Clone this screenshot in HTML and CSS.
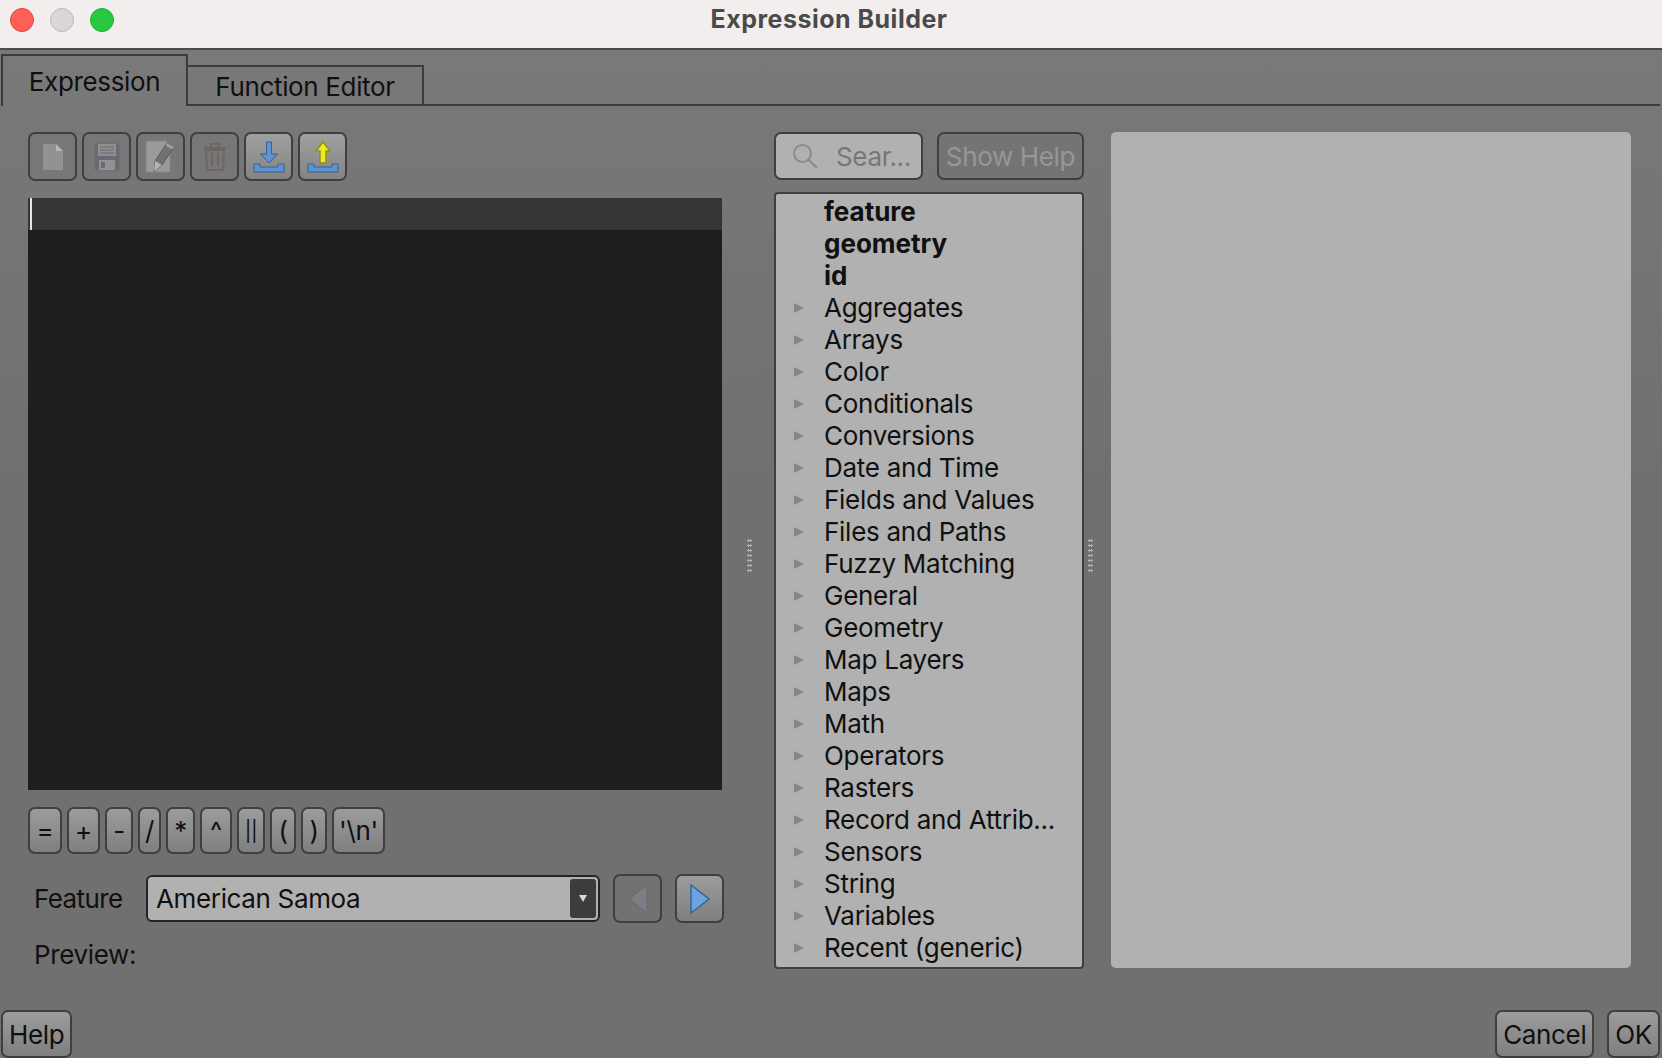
FILE: index.html
```html
<!DOCTYPE html>
<html lang="en">
<head>
<meta charset="utf-8">
<title>Expression Builder</title>
<link rel="stylesheet" href="styles.css">
</head>
<body>
<div class="window">
  <header class="titlebar">
    <div class="lights">
      <span class="light red"></span>
      <span class="light grey"></span>
      <span class="light green"></span>
    </div>
    <div class="title">Expression Builder</div>
  </header>
  <div class="tabs">
    <div class="tab active">Expression</div>
    <div class="tab">Function Editor</div>
    <div class="tab-rule"></div>
  </div>
  <main class="content">
    <section class="left">
      <div class="toolbar">
        <button class="tool off"><svg width="22" height="28" viewBox="0 0 22 28"><path d="M1 1h13l7 7v19H1z" fill="#929292"/><path d="M14 1l7 7h-7z" fill="#b5b5b5"/></svg></button>
        <button class="tool off"><svg width="26" height="28" viewBox="0 0 26 28"><rect x="0.500" y="0.500" width="25" height="27" rx="2" fill="#676c74"/><rect x="4" y="1" width="18" height="12" fill="#8f8f8f"/><path d="M6 4h14M6 7h14M6 10h14" stroke="#6a6a6a" stroke-width="1"/><rect x="5" y="17" width="16" height="10" fill="#929292"/><rect x="7" y="19" width="4" height="6" fill="#676c74"/></svg></button>
        <button class="tool off"><svg width="32" height="34" viewBox="0 0 32 34"><path d="M1 1h20l4 5v26H1z" fill="#9a9a9a" stroke="#848484"/><path d="M9 31l1-10L22 3l7 4-12 18z" fill="#727272" stroke="#595959" stroke-width="1"/><path d="M22 3l7 4-1.500 2.500-7-4z" fill="#a0a0a0"/><path d="M9 31l1-10 7 4z" fill="#b4b4b4"/></svg></button>
        <button class="tool off"><svg width="24" height="30" viewBox="0 0 24 30" fill="none" stroke="#736464" stroke-width="2"><path d="M1 6h22M8 5V2h8v3"/><path d="M3 8l1 20h16l1-20z"/><path d="M9 11v13M15 11v13"/></svg></button>
        <button class="tool on"><svg width="32" height="32" viewBox="0 0 32 32"><path d="M13.500 1h5v12h6l-8.500 9-8.500-9h6z" fill="#5c94d4" stroke="#3d5f87" stroke-width="1"/><path d="M1 23h6v3h18v-3h6v8H1z" fill="#5c94d4" stroke="#3d5f87" stroke-width="1"/></svg></button>
        <button class="tool on"><svg width="32" height="32" viewBox="0 0 32 32"><path d="M13 22V10H9l7-9 7 9h-4v12z" fill="#eeea22" stroke="#8f8f1c" stroke-width="1.500"/><path d="M1 23h6v3h18v-3h6v8H1z" fill="#5c94d4" stroke="#3d5f87" stroke-width="1"/></svg></button>
      </div>
      <div class="editor">
        <div class="current-line"><span class="caret"></span></div>
      </div>
      <div class="ops">
        <button class="op w34">=</button>
        <button class="op w33">+</button>
        <button class="op w28">-</button>
        <button class="op w23">/</button>
        <button class="op w29">*</button>
        <button class="op w32">^</button>
        <button class="op w28 bars">||</button>
        <button class="op w26">(</button>
        <button class="op w26">)</button>
        <button class="op w53">'\n'</button>
      </div>
      <div class="feature-row">
        <label class="field-label">Feature</label>
        <div class="combo">
          <span class="combo-text">American Samoa</span>
          <span class="combo-arrow"><svg width="8" height="7" viewBox="0 0 8 7"><path d="M0 0h8L4 7z" fill="#d8d8d8"/></svg></span>
        </div>
        <button class="nav off"><svg width="20" height="30" viewBox="0 0 20 30"><path d="M19 1v28L1 15z" fill="#7b7f84" stroke="#666a6e"/></svg></button>
        <button class="nav on"><svg width="20" height="30" viewBox="0 0 20 30"><path d="M1 1v28l18-14z" fill="#6da3de" stroke="#3d648f" stroke-width="1.500"/></svg></button>
      </div>
      <div class="preview-label">Preview:</div>
    </section>
    <div class="splitter wide"><span class="grip"></span></div>
    <section class="middle">
      <div class="search-row">
        <div class="search">
          <svg width="26" height="26" viewBox="0 0 26 26" fill="none" stroke="#8b8b8b" stroke-width="2"><circle cx="10.500" cy="10.500" r="8.500"/><path d="M16.500 16.500l8 8" stroke-linecap="round"/></svg>
          <span class="search-text">Sear...</span>
        </div>
        <button class="show-help">Show Help</button>
      </div>
      <div class="tree">
        <div class="row bold">feature</div>
        <div class="row bold">geometry</div>
        <div class="row bold">id</div>
        <div class="row branch">Aggregates</div>
        <div class="row branch">Arrays</div>
        <div class="row branch">Color</div>
        <div class="row branch">Conditionals</div>
        <div class="row branch">Conversions</div>
        <div class="row branch">Date and Time</div>
        <div class="row branch">Fields and Values</div>
        <div class="row branch">Files and Paths</div>
        <div class="row branch">Fuzzy Matching</div>
        <div class="row branch">General</div>
        <div class="row branch">Geometry</div>
        <div class="row branch">Map Layers</div>
        <div class="row branch">Maps</div>
        <div class="row branch">Math</div>
        <div class="row branch">Operators</div>
        <div class="row branch">Rasters</div>
        <div class="row branch">Record and Attrib...</div>
        <div class="row branch">Sensors</div>
        <div class="row branch">String</div>
        <div class="row branch">Variables</div>
        <div class="row branch">Recent (generic)</div>
      </div>
    </section>
    <div class="splitter narrow"><span class="grip"></span></div>
    <aside class="help-panel"></aside>
  </main>
  <footer class="footer">
    <button class="btn">Help</button>
    <div class="footer-right">
      <button class="btn">Cancel</button>
      <button class="btn">OK</button>
    </div>
  </footer>
</div>
</body>
</html>
```
FILE: styles.css
```css
* { box-sizing: border-box; }
html, body { margin: 0; padding: 0; }
body {
  width: 1662px;
  height: 1058px;
  overflow: hidden;
  font-family: Inter, "Noto Sans", "Liberation Sans", sans-serif;
  color: #101010;
  letter-spacing: -0.35px;
}
button { font-family: inherit; color: inherit; margin: 0; padding: 0; letter-spacing: inherit; }
.window {
  width: 1662px;
  height: 1058px;
  display: flex;
  flex-direction: column;
  background: linear-gradient(#7a7a7a, #707070 45%, #707070);
}
.titlebar {
  height: 50px;
  flex: none;
  background: #f3eeee;
  border-bottom: 2px solid #4c4c4c;
  display: flex;
  align-items: center;
  position: relative;
}
.lights { display: flex; gap: 16px; padding-left: 10px; margin-top: -8px; }
.light { width: 24px; height: 24px; border-radius: 50%; border: 1px solid; }
.red { background: #ff5f57; border-color: #e2463f; }
.grey { background: #dcd7d7; border-color: #bdb8b8; }
.green { background: #28c840; border-color: #1fae34; }
.title {
  position: absolute;
  left: 0;
  right: 4px;
  top: 4px;
  text-align: center;
  font-size: 25px;
  font-weight: 700;
  line-height: 30px;
  letter-spacing: 0.5px;
  color: #4a4a4a;
}
.tabs { height: 56px; flex: none; display: flex; align-items: flex-end; padding-left: 1px; }
.tab {
  height: 41px;
  width: 236px;
  border: 2px solid #3b3b3b;
  border-left: 0;
  font-size: 26px;
  line-height: 40px;
  text-align: center;
}
.tab.active {
  height: 52px;
  width: 187px;
  border-left: 2px solid #3b3b3b;
  border-bottom: 0;
  line-height: 52px;
}
.tab-rule { flex: 1; border-bottom: 2px solid #3b3b3b; margin-right: 2px; }
.content { display: flex; height: 863px; flex: none; padding: 26px 0 0 28px; }
.left { width: 696px; flex: none; display: flex; flex-direction: column; }
.toolbar { display: flex; gap: 5px; }
.tool {
  width: 49px;
  height: 49px;
  border: 2px solid #3f3f3f;
  border-radius: 7px;
  display: flex;
  align-items: center;
  justify-content: center;
}
.tool.off { background: #777; }
.tool.on { background: linear-gradient(#a0a0a0, #838383); }
.editor { width: 694px; height: 592px; flex: none; margin-top: 17px; background: #1e1e1e; }
.current-line { height: 32px; background: #353535; }
.caret { display: block; width: 2px; height: 32px; background: #e6e6e6; margin-left: 2px; }
.ops { display: flex; gap: 5px; margin-top: 17px; }
.op {
  height: 47px;
  border: 2px solid #3f3f3f;
  border-radius: 7px;
  background: linear-gradient(#9c9c9c, #7f7f7f);
  font-size: 26px;
  line-height: 1;
}
.op.bars { font-size: 20px; }
.w23 { width: 23px; }
.w26 { width: 26px; }
.w28 { width: 28px; }
.w29 { width: 29px; }
.w32 { width: 32px; }
.w33 { width: 33px; }
.w34 { width: 34px; }
.w53 { width: 53px; }
.feature-row { display: flex; align-items: center; margin-top: 20px; height: 49px; flex: none; }
.field-label { width: 118px; padding-left: 6px; font-size: 26px; flex: none; letter-spacing: -0.6px; }
.combo {
  width: 454px;
  height: 47px;
  border: 2px solid #242424;
  border-radius: 6px;
  background: #b1b1b1;
  display: flex;
  align-items: center;
  justify-content: space-between;
  padding: 2px 2px 2px 8px;
  font-size: 26px;
  flex: none;
}
.combo-arrow {
  width: 26px;
  height: 39px;
  background: #3c3c3c;
  border-radius: 3px;
  display: flex;
  align-items: center;
  justify-content: center;
}
.nav {
  width: 49px;
  height: 49px;
  border: 2px solid #3f3f3f;
  border-radius: 7px;
  display: flex;
  align-items: center;
  justify-content: center;
  margin-left: 13px;
}
.nav.off { background: #727272; }
.nav.on { background: linear-gradient(#9c9c9c, #7f7f7f); }
.preview-label { margin-top: 18px; padding-left: 6px; font-size: 26px; line-height: 28px; flex: none; }
.splitter { display: flex; align-items: center; justify-content: center; flex: none; height: 837px; }
.splitter.wide { width: 50px; }
.splitter.narrow { width: 27px; padding-right: 14px; }
.grip {
  display: block;
  width: 5px;
  height: 35px;
  margin-top: 9px;
  background-image: radial-gradient(circle, #b8b8b8 1px, transparent 1.300px);
  background-size: 2.500px 5px;
}
.middle { width: 310px; flex: none; display: flex; flex-direction: column; }
.search-row { display: flex; justify-content: space-between; }
.search {
  width: 149px;
  height: 48px;
  border: 2px solid #3f3f3f;
  border-radius: 7px;
  background: #b1b1b1;
  display: flex;
  align-items: center;
  padding-left: 16px;
  gap: 18px;
  font-size: 26px;
  color: #777;
}
.show-help {
  width: 147px;
  height: 48px;
  border: 2px solid #3f3f3f;
  border-radius: 7px;
  background: #747474;
  font-size: 26px;
  color: #979797;
}
.tree {
  width: 310px;
  height: 837px;
  margin-top: 12px;
  border: 2px solid #3f3f3f;
  border-radius: 4px;
  background: #b1b1b1;
  padding-top: 2px;
  overflow: hidden;
}
.row {
  height: 32px;
  line-height: 32px;
  font-size: 26px;
  letter-spacing: -0.27px;
  padding-left: 48px;
  white-space: nowrap;
  position: relative;
}
.row.bold { font-weight: 700; letter-spacing: 0; }
.row.branch::before {
  content: "";
  position: absolute;
  left: 18px;
  top: 11px;
  border-left: 10px solid #868686;
  border-top: 5px solid transparent;
  border-bottom: 5px solid transparent;
}
.help-panel { width: 520px; height: 836px; flex: none; background: #b1b1b1; border-radius: 5px; }
.footer { display: flex; justify-content: space-between; align-items: flex-end; flex: 1; padding: 0 2px 0 1px; }
.footer-right { display: flex; gap: 13px; }
.btn {
  height: 48px;
  padding: 0 6px;
  border: 2px solid #3f3f3f;
  border-radius: 7px;
  background: linear-gradient(#9c9c9c, #7f7f7f);
  font-size: 26px;
}
```
